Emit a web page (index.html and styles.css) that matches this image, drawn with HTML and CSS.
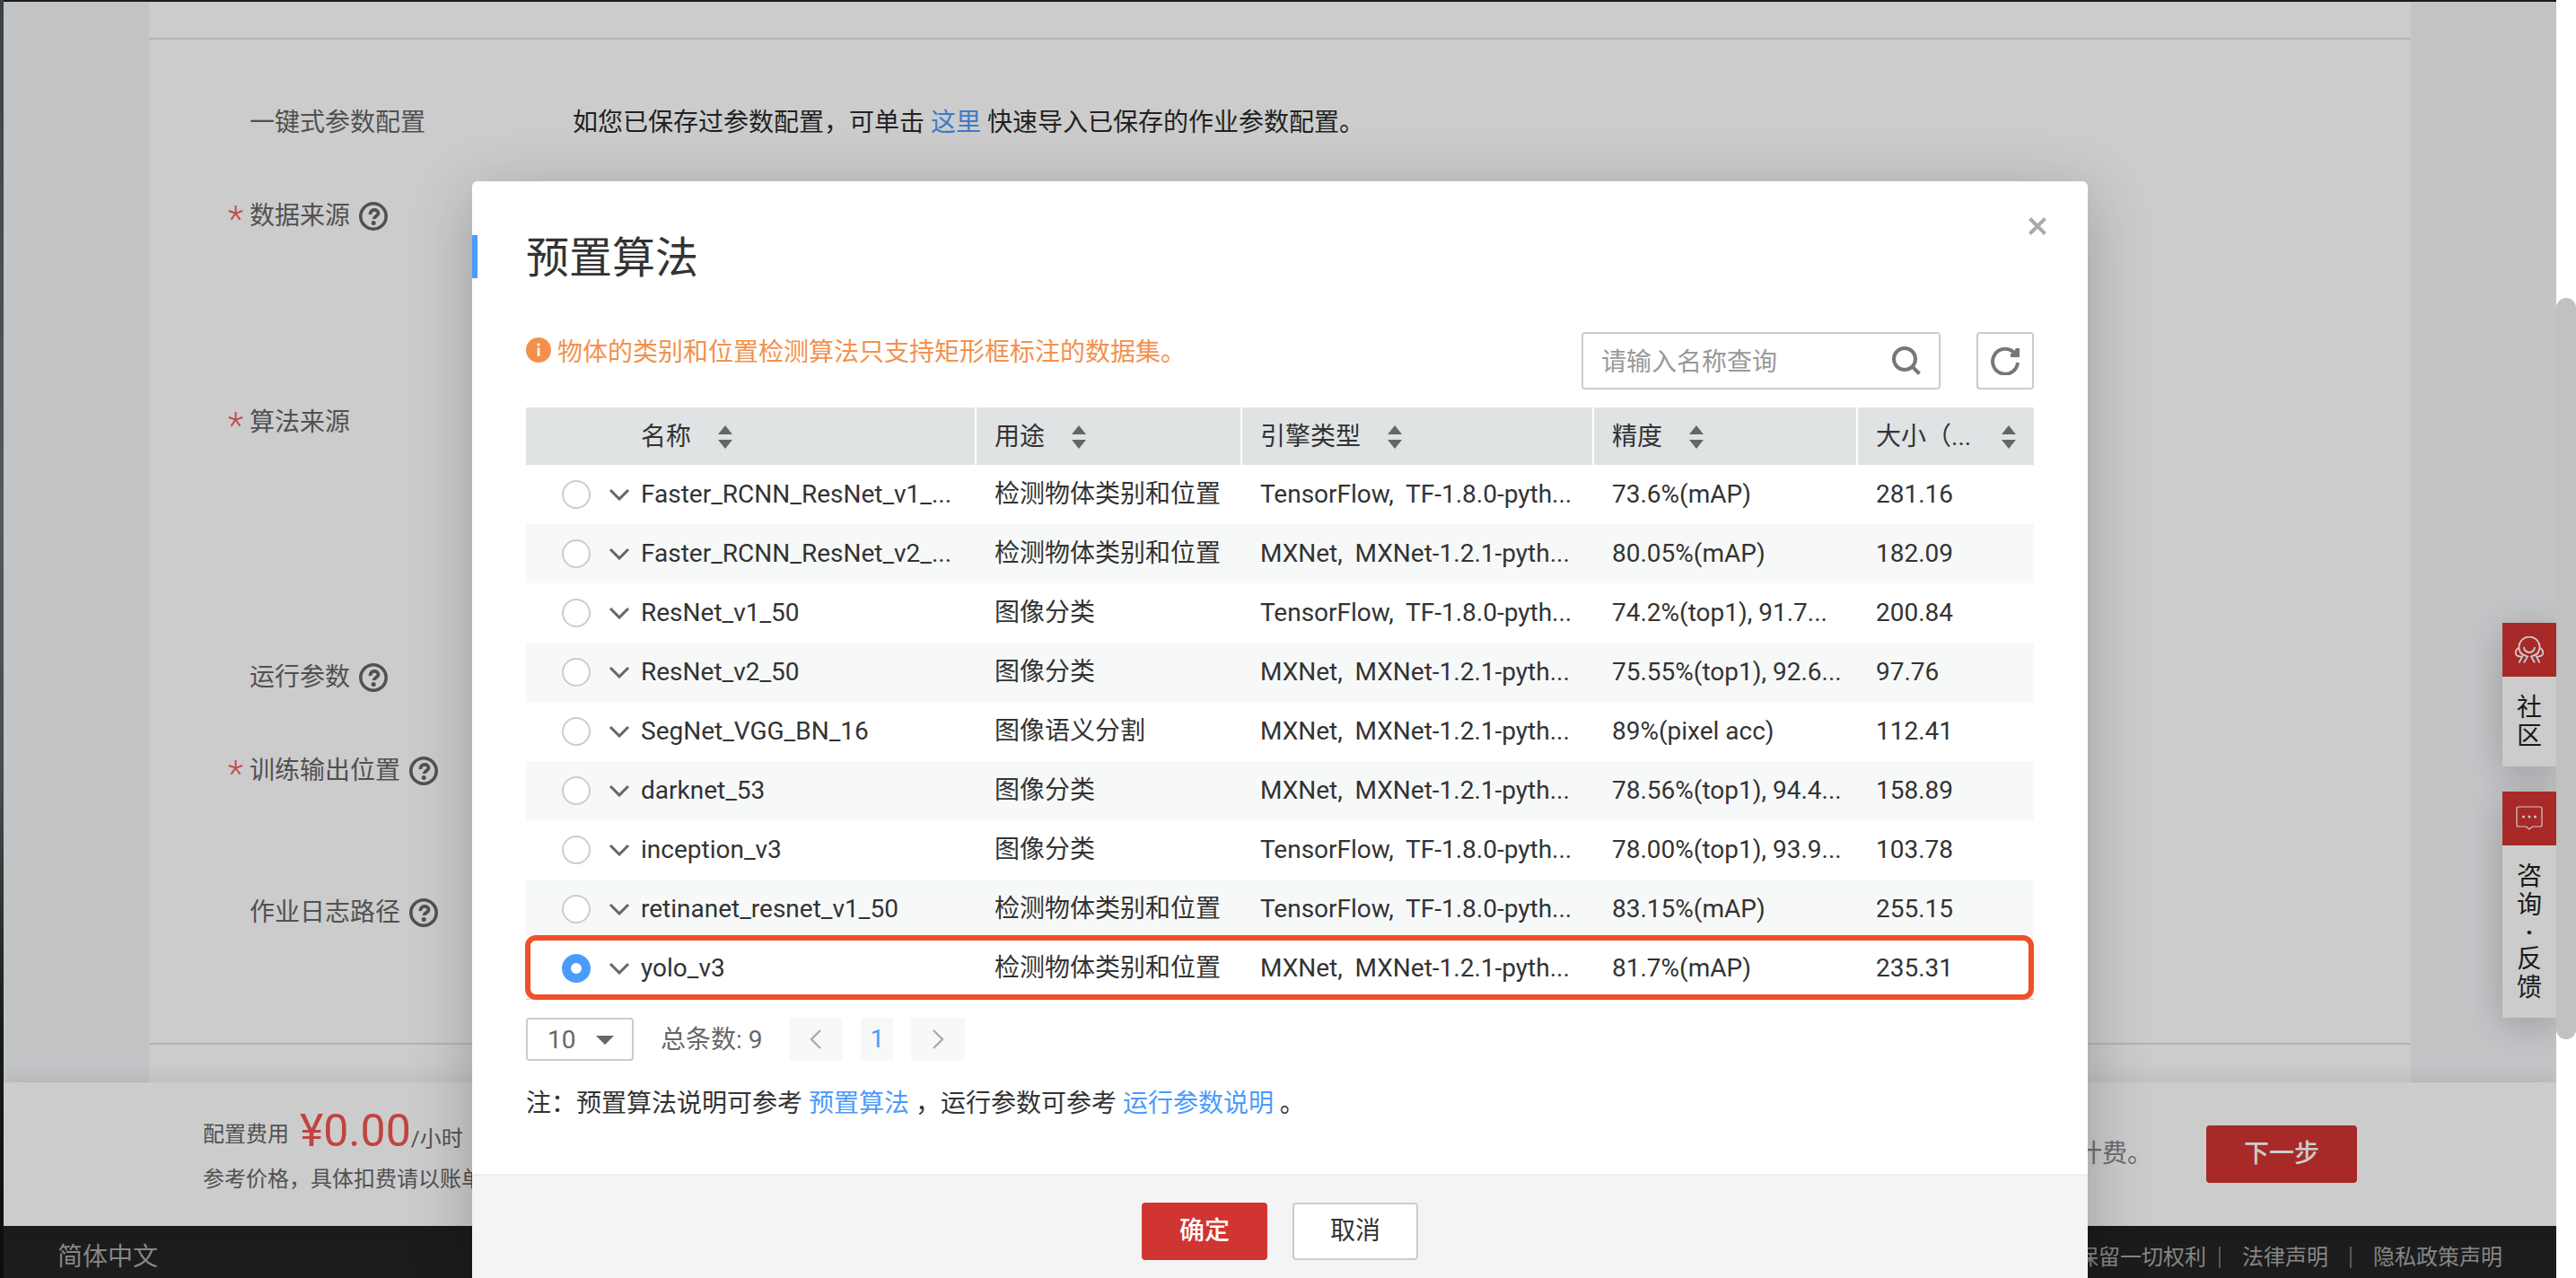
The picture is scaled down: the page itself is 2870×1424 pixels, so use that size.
FILE: index.html
```html
<!DOCTYPE html>
<html lang="zh-CN">
<head>
<meta charset="utf-8">
<title>创建训练作业</title>
<link rel="stylesheet" href="styles.css">
</head>
<body>
<svg class="sprite" aria-hidden="true">
  <symbol id="i-help" viewBox="0 0 32 32"><circle cx="16" cy="16" r="14.2" fill="none" stroke="currentColor" stroke-width="3.6"/><path d="M12.500 14c-.5-6.500 9-6.500 9-1.200 0 3-4.800 3-5 6.200" fill="none" stroke="currentColor" stroke-width="3.800"/><circle cx="16.200" cy="23.400" r="2.500" fill="currentColor"/></symbol>
  <symbol id="i-sort" viewBox="0 0 16 26"><path d="M8 0l8 10H0zM8 26l8-10H0z" fill="currentColor"/></symbol>
  <symbol id="i-down" viewBox="0 0 24 14"><path d="M2 2l10 10L22 2" fill="none" stroke="currentColor" stroke-width="3"/></symbol>
</svg>

<div class="screen">
  <div class="desktop-edge"></div>
  <div class="viewport">
    <main class="page">
      <section class="form-section">
        <div class="form-row form-row--short">
          <span class="mark"></span><div class="label">一键式参数配置</div>
          <p class="hint">如您已保存过参数配置，可单击 <a href="#">这里</a> 快速导入已保存的作业参数配置。</p>
        </div>
        <div class="form-row form-row--tall"><span class="mark">*</span><div class="label">数据来源<svg class="help"><use href="#i-help"/></svg></div></div>
        <div class="form-row form-row--taller"><span class="mark">*</span><div class="label">算法来源</div></div>
        <div class="form-row form-row--short"><span class="mark"></span><div class="label">运行参数<svg class="help"><use href="#i-help"/></svg></div></div>
        <div class="form-row form-row--medium"><span class="mark">*</span><div class="label">训练输出位置<svg class="help"><use href="#i-help"/></svg></div></div>
        <div class="form-row form-row--medium"><span class="mark"></span><div class="label">作业日志路径<svg class="help"><use href="#i-help"/></svg></div></div>
      </section>
    </main>

    <div class="price-bar">
      <div class="price">
        <div class="price-line">配置费用<div class="amount"><strong>¥0.00</strong>/小时</div></div>
        <div class="price-note">参考价格，具体扣费请以账单为准。</div>
      </div>
      <div class="next">
        <span>提交后开始计费。</span>
        <button type="button" class="btn btn--primary btn--wide">下一步</button>
      </div>
    </div>

    <footer class="site-footer">
      <a class="lang" href="#">简体中文</a>
      <div class="legal"><span>保留一切权利</span><a href="#">法律声明</a><a href="#">隐私政策声明</a></div>
    </footer>

    <aside class="dock">
      <a class="dock-item" href="#">
        <span class="dock-icon"><svg width="32" height="30" viewBox="0 0 32 30" fill="none" stroke="currentColor" stroke-width="1.800"><path d="M9.500 21.500A11.500 11.500 0 1 1 22.500 21.500"/><path d="M10 12a6 6 0 0 0 12 0"/><path d="M4.500 12.500C0 15-.5 20 3 22l5 1-3.500 6.500M6 18c1 2 4 3 8 4.500l-4 7M27.500 12.500C32 15 32.500 20 29 22l-5 1 3.500 6.500M26 18c-1 2-4 3-8 4.500l4 7"/></svg></span>
        <span class="dock-text">社<br>区</span>
      </a>
      <a class="dock-item" href="#">
        <span class="dock-icon"><svg width="30" height="28" viewBox="0 0 30 28" fill="none" stroke="currentColor" stroke-width="1.200"><path d="M3 1h24q2 0 2 2v18q0 2-2 2h-8.500L15 26l-3.500-3H3q-2 0-2-2V3q0-2 2-2z"/><g fill="currentColor" stroke="none"><circle cx="8.500" cy="12" r="1.500"/><circle cx="15" cy="12" r="1.500"/><circle cx="21.500" cy="12" r="1.500"/></g></svg></span>
        <span class="dock-text">咨<br>询<br><b class="dot">·</b>反<br>馈</span>
      </a>
    </aside>

    <div class="overlay">
      <div class="modal" role="dialog" aria-labelledby="modal-title">
        <div class="modal-main">
          <button type="button" class="close" aria-label="关闭"><svg width="20" height="20" viewBox="0 0 20 20"><path d="M1.500 1.500l17 17M18.500 1.500l-17 17" stroke="currentColor" stroke-width="4"/></svg></button>
          <h1 id="modal-title" class="modal-title">预置算法</h1>
          <div class="modal-body">
            <div class="toolbar">
              <p class="warning"><svg width="28" height="28" viewBox="0 0 28 28"><circle cx="14" cy="14" r="14" fill="currentColor"/><path d="M14 11.500V21" stroke="#fff" stroke-width="2.600"/><circle cx="14" cy="8" r="1.600" fill="#fff"/></svg>物体的类别和位置检测算法只支持矩形框标注的数据集。</p>
              <div class="search">
                <input type="text" placeholder="请输入名称查询" aria-label="请输入名称查询">
                <button type="button" aria-label="搜索"><svg width="32" height="32" viewBox="0 0 32 32" fill="none" stroke="currentColor" stroke-width="4"><circle cx="14" cy="14" r="12"/><path d="M22.500 22.500l8 8"/></svg></button>
              </div>
              <button type="button" class="refresh" aria-label="刷新"><svg width="32" height="32" viewBox="0 0 32 32"><path d="M27 8A14 14 0 1 0 30 18" fill="none" stroke="currentColor" stroke-width="4"/><path d="M32 2v10H22V8l3-1 3-5z" fill="currentColor"/></svg></button>
            </div>

            <table class="algos">
              <colgroup><col class="c-name"><col class="c-use"><col class="c-engine"><col class="c-acc"><col class="c-size"></colgroup>
              <thead><tr>
                <th><span class="th">名称<svg class="sort"><use href="#i-sort"/></svg></span></th>
                <th><span class="th">用途<svg class="sort"><use href="#i-sort"/></svg></span></th>
                <th><span class="th">引擎类型<svg class="sort"><use href="#i-sort"/></svg></span></th>
                <th><span class="th">精度<svg class="sort"><use href="#i-sort"/></svg></span></th>
                <th><span class="th th--spread">大小（...<svg class="sort"><use href="#i-sort"/></svg></span></th>
              </tr></thead>
              <tbody>
                <tr><td><div class="name"><input type="radio" name="algo" id="a1"><button type="button" aria-label="展开"><svg><use href="#i-down"/></svg></button><label for="a1">Faster_RCNN_ResNet_v1_...</label></div></td><td>检测物体类别和位置</td><td>TensorFlow,&nbsp; TF-1.8.0-pyth...</td><td>73.6%(mAP)</td><td>281.16</td></tr>
                <tr><td><div class="name"><input type="radio" name="algo" id="a2"><button type="button" aria-label="展开"><svg><use href="#i-down"/></svg></button><label for="a2">Faster_RCNN_ResNet_v2_...</label></div></td><td>检测物体类别和位置</td><td>MXNet,&nbsp; MXNet-1.2.1-pyth...</td><td>80.05%(mAP)</td><td>182.09</td></tr>
                <tr><td><div class="name"><input type="radio" name="algo" id="a3"><button type="button" aria-label="展开"><svg><use href="#i-down"/></svg></button><label for="a3">ResNet_v1_50</label></div></td><td>图像分类</td><td>TensorFlow,&nbsp; TF-1.8.0-pyth...</td><td>74.2%(top1), 91.7...</td><td>200.84</td></tr>
                <tr><td><div class="name"><input type="radio" name="algo" id="a4"><button type="button" aria-label="展开"><svg><use href="#i-down"/></svg></button><label for="a4">ResNet_v2_50</label></div></td><td>图像分类</td><td>MXNet,&nbsp; MXNet-1.2.1-pyth...</td><td>75.55%(top1), 92.6...</td><td>97.76</td></tr>
                <tr><td><div class="name"><input type="radio" name="algo" id="a5"><button type="button" aria-label="展开"><svg><use href="#i-down"/></svg></button><label for="a5">SegNet_VGG_BN_16</label></div></td><td>图像语义分割</td><td>MXNet,&nbsp; MXNet-1.2.1-pyth...</td><td>89%(pixel acc)</td><td>112.41</td></tr>
                <tr><td><div class="name"><input type="radio" name="algo" id="a6"><button type="button" aria-label="展开"><svg><use href="#i-down"/></svg></button><label for="a6">darknet_53</label></div></td><td>图像分类</td><td>MXNet,&nbsp; MXNet-1.2.1-pyth...</td><td>78.56%(top1), 94.4...</td><td>158.89</td></tr>
                <tr><td><div class="name"><input type="radio" name="algo" id="a7"><button type="button" aria-label="展开"><svg><use href="#i-down"/></svg></button><label for="a7">inception_v3</label></div></td><td>图像分类</td><td>TensorFlow,&nbsp; TF-1.8.0-pyth...</td><td>78.00%(top1), 93.9...</td><td>103.78</td></tr>
                <tr><td><div class="name"><input type="radio" name="algo" id="a8"><button type="button" aria-label="展开"><svg><use href="#i-down"/></svg></button><label for="a8">retinanet_resnet_v1_50</label></div></td><td>检测物体类别和位置</td><td>TensorFlow,&nbsp; TF-1.8.0-pyth...</td><td>83.15%(mAP)</td><td>255.15</td></tr>
                <tr class="highlight"><td><div class="name"><input type="radio" name="algo" id="a9" checked><button type="button" aria-label="展开"><svg><use href="#i-down"/></svg></button><label for="a9">yolo_v3</label></div></td><td>检测物体类别和位置</td><td>MXNet,&nbsp; MXNet-1.2.1-pyth...</td><td>81.7%(mAP)</td><td>235.31</td></tr>
              </tbody>
            </table>

            <div class="pager">
              <div class="page-size">
                <select aria-label="每页条数"><option>10</option></select>
                <svg width="20" height="10" viewBox="0 0 20 10"><path d="M0 0h20L10 10z" fill="currentColor"/></svg>
              </div>
              <span class="total">总条数: 9</span>
              <button type="button" class="step" aria-label="上一页"><svg width="14" height="22" viewBox="0 0 14 22"><path d="M12 1L2 11l10 10" fill="none" stroke="currentColor" stroke-width="2.400"/></svg></button>
              <button type="button" class="step step--current">1</button>
              <button type="button" class="step" aria-label="下一页"><svg width="14" height="22" viewBox="0 0 14 22"><path d="M2 1l10 10L2 21" fill="none" stroke="currentColor" stroke-width="2.400"/></svg></button>
            </div>

            <p class="note">注：预置算法说明可参考 <a href="#">预置算法</a> ，运行参数可参考 <a href="#">运行参数说明</a> 。</p>
          </div>
        </div>
        <div class="modal-footer">
          <button type="button" class="btn btn--primary">确定</button>
          <button type="button" class="btn">取消</button>
        </div>
      </div>
    </div>
  </div>
  <div class="scrollbar"><div class="thumb"></div></div>
</div>
</body>
</html>
```
FILE: styles.css
```css
* { box-sizing: border-box; }

body {
  margin: 0;
  font-family: Roboto, "Noto Sans CJK SC", sans-serif;
  font-size: 28px;
  line-height: 40px;
  color: #333;
}

p, h1 { margin: 0; font-weight: 400; }
a { color: #4b9bfa; text-decoration: none; }
svg { display: block; flex: none; }
button, input, select { font: inherit; color: inherit; }
button { padding: 0; border: 0; background: none; }
.sprite { position: absolute; width: 0; height: 0; }

.screen {
  display: grid;
  grid-template-columns: 4px minmax(0, 1fr) 22px;
  height: 100vh;
  overflow: hidden;
}

.desktop-edge { background: linear-gradient(#3b4248, #53595f 40%, #454b4e 62%, #1a1e1a 80%, #0b0d0a); }

.viewport {
  position: relative;
  display: flex;
  flex-direction: column;
  overflow: hidden;
  border-top: 2px solid #1c1c1c;
  background: #f4f5f8;
}

.scrollbar { background: #fff; padding-top: 332px; }
.thumb { height: 826px; border-radius: 11px; background: #c1c1c1; }

/* Form behind the dialog */
.page {
  flex: 1;
  min-height: 0;
  margin: 0 162px;
  padding-top: 40px;
  background: #fff;
}
.form-section {
  padding: 73px 0 7px 88px;
  border-top: 2px solid #e1e1e1;
  border-bottom: 2px solid #e1e1e1;
}
.form-row { display: flex; align-items: flex-start; }
.form-row--short { min-height: 104px; }
.form-row--medium { min-height: 158px; }
.form-row--tall { min-height: 230px; }
.form-row--taller { min-height: 284px; }
.mark {
  width: 24px;
  padding-top: 4px;
  font-size: 40px;
  font-weight: 300;
  color: #f0625a;
}
.label {
  display: flex;
  align-items: center;
  gap: 10px;
  width: 360px;
  color: #666;
}
.help { width: 32px; height: 32px; }
.hint { color: #2b2b2b; }

.price-bar {
  position: relative;
  display: flex;
  justify-content: space-between;
  align-items: center;
  height: 160px;
  padding: 0 222px;
  background: #fff;
  box-shadow: 0 -2px 24px rgba(0, 0, 0, .1);
  color: #666;
}
.price { padding-top: 6px; font-size: 24px; line-height: 50px; white-space: nowrap; }
.price-line { display: flex; align-items: center; gap: 12px; height: 50px; }
.price-line strong { font-size: 50px; font-weight: 400; color: #f0554f; }
.next { display: flex; align-items: center; gap: 60px; color: #888; }

.btn {
  width: 140px;
  height: 64px;
  border: 2px solid #ccc;
  border-radius: 4px;
  background: #fff;
}
.btn--primary { border-color: #d13532; background: #d13532; color: #fff; font-weight: 500; }
.btn--wide { width: 168px; }

.site-footer {
  display: flex;
  justify-content: space-between;
  align-items: center;
  height: 58px;
  padding: 12px 60px 0;
  background: #232323;
  color: #a8a8a8;
}
.site-footer a { color: inherit; }
.legal { display: flex; align-items: center; font-size: 24px; line-height: 24px; }
.legal a { margin-left: 14px; padding-left: 24px; border-left: 2px solid #6e6e6e; }
.legal a + a { margin-left: 24px; }

.dock {
  position: absolute;
  top: 692px;
  right: 0;
  display: flex;
  flex-direction: column;
  gap: 28px;
}
.dock-item {
  width: 60px;
  background: #fff;
  box-shadow: 0 8px 40px rgba(0, 0, 0, .2);
  text-align: center;
  color: #222;
}
.dock-icon {
  display: flex;
  justify-content: center;
  align-items: center;
  height: 60px;
  background: #d13532;
  color: #fff;
}
.dock-text { display: block; padding: 19px 0 17px; line-height: 32px; }
.dot { display: block; line-height: 28px; }

/* Dialog */
.overlay {
  position: absolute;
  inset: 0;
  display: flex;
  justify-content: center;
  align-items: flex-start;
  padding-top: 200px;
  overflow: hidden;
  background: rgba(0, 0, 0, .2);
}
.modal {
  flex: none;
  width: 1800px;
  max-width: 100%;
  border-radius: 6px;
  background: #fff;
  box-shadow: 0 16px 72px rgba(0, 0, 0, .24);
}
.modal-main { position: relative; padding: 60px 0; }
.close { position: absolute; top: 40px; right: 46px; color: #aaa; }
.modal-title {
  height: 48px;
  padding: 2px 0 0 54px;
  border-left: 6px solid #4b9bfa;
  font-size: 48px;
  line-height: 48px;
}
.modal-body { padding: 60px 60px 0; }

.toolbar { display: flex; gap: 40px; }
.warning {
  display: flex;
  gap: 7px;
  margin-right: auto;
  line-height: 46px;
  color: #f3914c;
}
.warning svg { margin-top: 6px; }
.search {
  display: flex;
  align-items: center;
  width: 400px;
  height: 64px;
  padding: 0 20px;
  border: 2px solid #ccc;
  border-radius: 4px;
  color: #777;
}
.search input { flex: 1; min-width: 0; padding: 4px 0 0; border: 0; outline: 0; background: none; }
.search input::placeholder { color: #999; opacity: 1; }
.refresh {
  display: flex;
  justify-content: center;
  align-items: center;
  width: 64px;
  height: 64px;
  border: 2px solid #ccc;
  border-radius: 4px;
  color: #777;
}

.algos {
  width: 100%;
  margin-top: 20px;
  table-layout: fixed;
  border-spacing: 0;
  border-bottom: 2px solid #ddd;
}
.c-name { width: 502px; }
.c-use { width: 296px; }
.c-engine { width: 392px; }
.c-acc { width: 294px; }
.algos th {
  height: 64px;
  padding: 2px 0 0 20px;
  border-right: 2px solid #fff;
  background: #dfe3e4;
  font-weight: 400;
  text-align: left;
}
.algos th:first-child { padding-left: 128px; }
.algos th:last-child { border-right: 0; padding-right: 20px; }
.th { display: flex; align-items: center; gap: 30px; }
.th--spread { justify-content: space-between; gap: 0; white-space: nowrap; }
.sort { width: 16px; height: 26px; color: #666; }
.algos td { height: 66px; padding: 0 0 0 20px; white-space: nowrap; }
.algos td:first-child { padding-left: 40px; }
.algos tbody tr:nth-child(even) { background: #f7f9f9; }
.name { display: flex; align-items: center; }
.name input {
  appearance: none;
  width: 32px;
  height: 32px;
  margin: 0 20px 0 0;
  border: 2px solid #ccc;
  border-radius: 50%;
  background: #fff;
}
.name input:checked { border: 10px solid #4b9bfa; }
.name button { margin-right: 12px; color: #666; }
.name button svg { width: 24px; height: 14px; }
/* The frame spans the whole row: the row is its containing block */
.highlight { position: relative; }
.highlight td:first-child::after {
  content: "";
  position: absolute;
  inset: -4px 0 -2px -1px;
  border: 6px solid #f05028;
  border-radius: 12px;
  pointer-events: none;
}

.pager { display: flex; align-items: center; gap: 20px; margin-top: 20px; color: #666; }
.page-size { position: relative; width: 120px; height: 48px; }
.page-size select {
  appearance: none;
  width: 100%;
  height: 100%;
  padding: 2px 22px 0;
  border: 2px solid #ccc;
  border-radius: 4px;
  background: #fff;
}
.page-size svg { position: absolute; top: 20px; right: 22px; pointer-events: none; }
.total { padding: 2px 10px 0; }
.step {
  display: flex;
  justify-content: center;
  align-items: center;
  width: 60px;
  height: 48px;
  background: #f7f9f9;
  color: #aaa;
}
.step--current { width: 36px; color: #4b9bfa; }

.note { margin: 28px 0 -2px; }

.modal-footer {
  display: flex;
  justify-content: center;
  gap: 28px;
  padding: 30px;
  border-top: 2px solid #eee;
  background: #f4f4f4;
}
```
